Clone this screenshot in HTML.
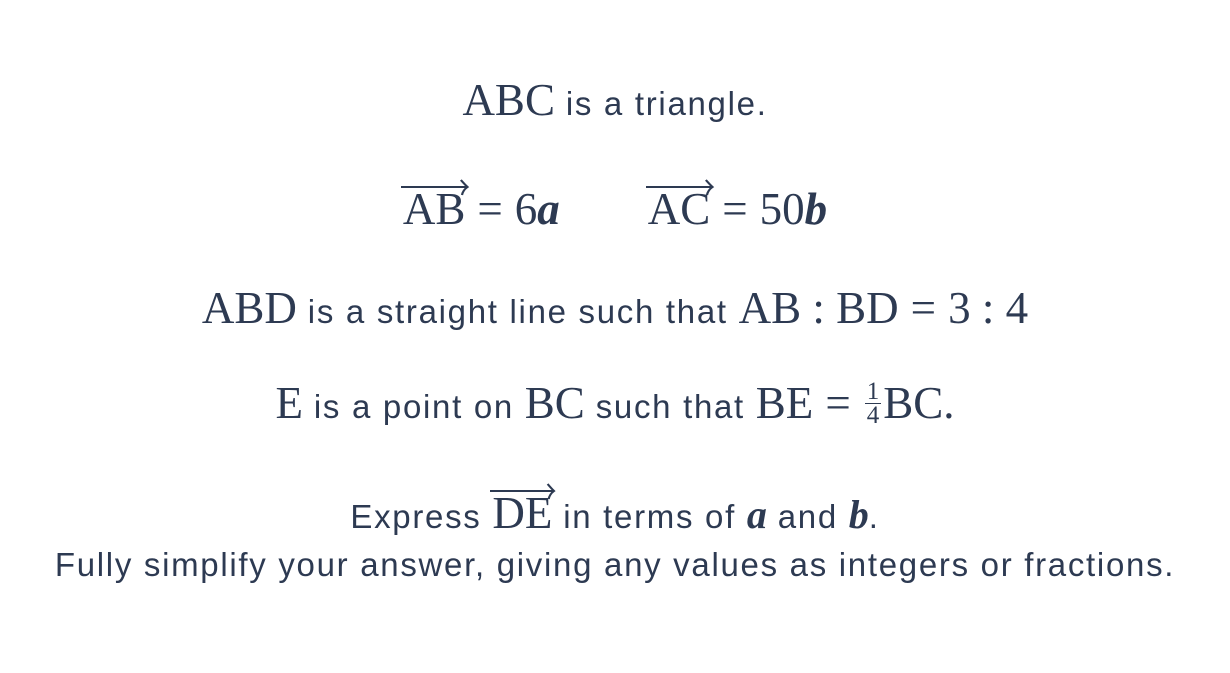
<!DOCTYPE html>
<html><head><meta charset="utf-8"><style>
body{margin:0;width:1230px;height:673px;background:#fff;color:#2d3a52;font-family:"Liberation Sans",sans-serif;overflow:hidden}
.l{position:absolute;left:0;width:1230px;text-align:center;font-size:33px;letter-spacing:1.7px;line-height:40px;white-space:nowrap}
.m{font-family:"Liberation Serif",serif;font-size:45px;letter-spacing:0}
.b{font-weight:bold;font-style:italic}
.e{margin:0 12px}
.v{position:relative;display:inline-block}
.v svg{position:absolute;left:-2px;top:-12px;height:20px;width:calc(100% + 4px);overflow:visible}
.fr{display:inline-block;vertical-align:middle;text-align:center;font-size:25px;line-height:23px;margin:0 2px;position:relative;top:-4px}
.fr span{display:block}
.fr .n{border-bottom:1.5px solid #2d3a52;padding:0 2px}
</style></head><body>
<div class="l" style="top:80px"><span class="m">ABC</span> is a triangle.</div>
<div class="l" style="top:189px"><span class="m"><span class="v">AB<svg viewBox="0 0 60 20" preserveAspectRatio="none"><path d="M0 10H60M54 3Q58 8 60 10Q56 13 55 18" stroke="#2d3a52" stroke-width="2" fill="none"/></svg></span><span class="e">=</span>6<span class="b">a</span></span><span style="display:inline-block;width:88px"></span><span class="m"><span class="v">AC<svg viewBox="0 0 60 20" preserveAspectRatio="none"><path d="M0 10H60M54 3Q58 8 60 10Q56 13 55 18" stroke="#2d3a52" stroke-width="2" fill="none"/></svg></span><span class="e">=</span>50<span class="b">b</span></span></div>
<div class="l" style="top:288px"><span class="m">ABD</span> is a straight line such that <span class="m">AB : BD<span class="e">=</span>3 : 4</span></div>
<div class="l" style="top:383px"><span class="m">E</span> is a point on <span class="m">BC</span> such that <span class="m">BE<span class="e">=</span><span class="fr"><span class="n">1</span><span>4</span></span>BC.</span></div>
<div class="l" style="top:493px">Express <span class="m"><span class="v">DE<svg viewBox="0 0 60 20" preserveAspectRatio="none"><path d="M0 10H60M54 3Q58 8 60 10Q56 13 55 18" stroke="#2d3a52" stroke-width="2" fill="none"/></svg></span></span> in terms of <span class="m b" style="font-size:40px">a</span> and <span class="m b" style="font-size:40px">b</span>.</div>
<div class="l" style="top:545px">Fully simplify your answer, giving any values as integers or fractions.</div>
</body></html>
